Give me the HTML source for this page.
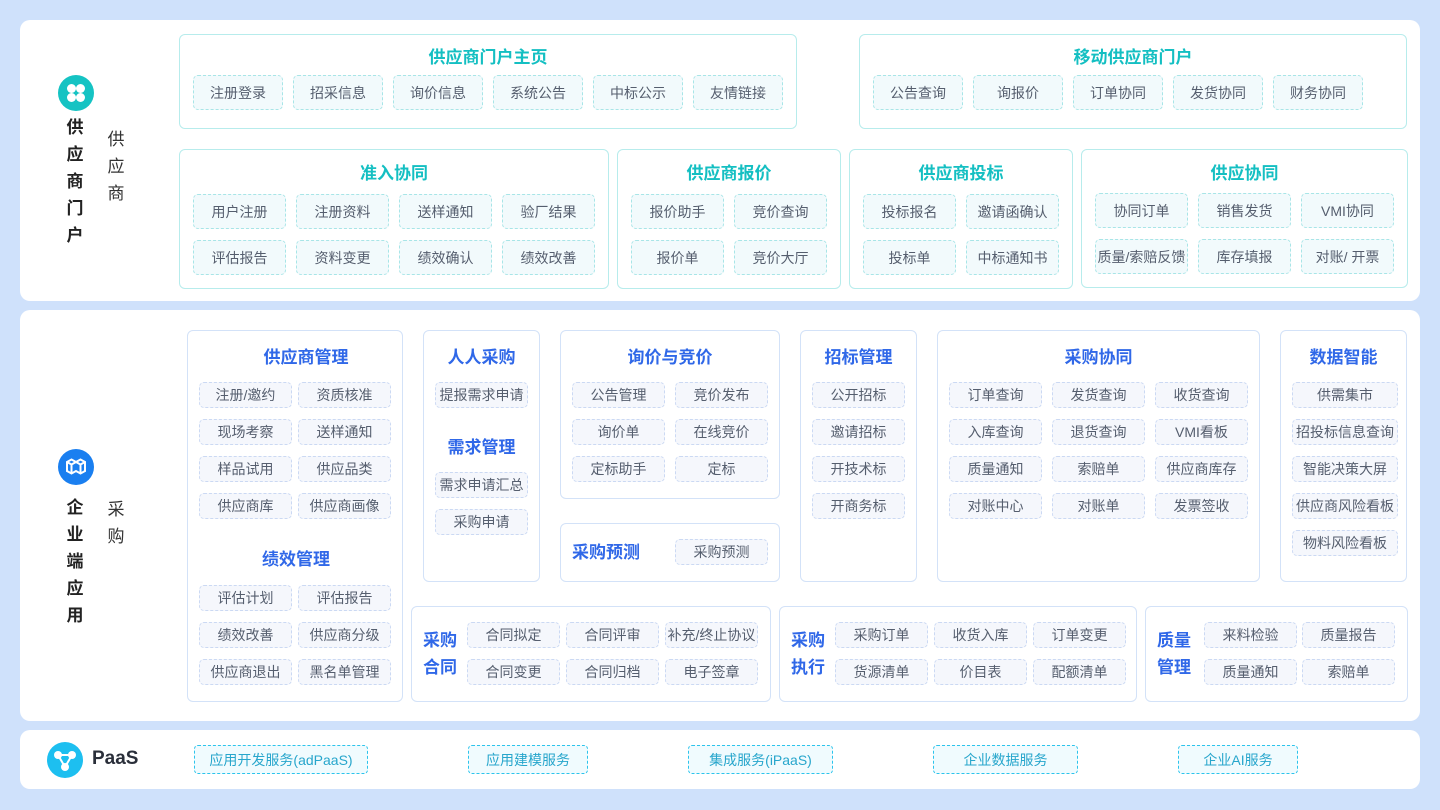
<!DOCTYPE html>
<html><head><meta charset="utf-8"><style>
*{margin:0;padding:0;box-sizing:border-box}
body{width:1440px;height:810px;background:#cfe1fb;position:relative;overflow:hidden;font-family:"Liberation Sans","Noto Sans CJK SC",sans-serif;color:#555e6e}
.p{position:absolute;background:#fff;border-radius:10px}
.b{position:absolute;border-radius:6px;background:#fff}
.t{border:1px solid #b7ecec}
.u{border:1px solid #d3e2f8}
.c{position:absolute;border-radius:5px;font-size:14px;display:flex;align-items:center;justify-content:center;white-space:nowrap}
.ct{background:#f2fafc;border:1px dashed #a8e5e7;height:35px;width:93px}
.cu{background:#f5f7fc;border:1px dashed #cbd9f3;height:26px;width:93px}
.h{position:absolute;font-size:17px;font-weight:bold;white-space:nowrap}
.ht{color:#14bfc2}
.hu{color:#3068e8}
.v{position:absolute;font-size:17px;line-height:27px;width:20px;text-align:center}
.pc{position:absolute;top:745px;height:29px;border:1px dashed #2cc4ec;background:#f0fbfe;color:#27a6cc;border-radius:4px;font-size:14px;display:flex;align-items:center;justify-content:center}
</style></head><body>
<div class="p" style="left:20px;top:20px;width:1400px;height:281px"></div>
<div class="p" style="left:20px;top:310px;width:1400px;height:411px"></div>
<div class="p" style="left:20px;top:730px;width:1400px;height:59px"></div>

<svg style="position:absolute;left:58px;top:75px" width="36" height="36" viewBox="0 0 36 36"><circle cx="18" cy="18" r="18" fill="#15c3c3"/><circle cx="13.5" cy="13.5" r="4.5" fill="#fff"/><circle cx="22.5" cy="13.5" r="4.5" fill="#fff"/><circle cx="13.5" cy="22.5" r="4.5" fill="#fff"/><circle cx="22.5" cy="22.5" r="4.5" fill="#fff"/></svg>
<div class="v" style="left:65px;top:114px;font-weight:bold;color:#222">供<br>应<br>商<br>门<br>户</div>
<div class="v" style="left:106px;top:126px;color:#333">供<br>应<br>商</div>
<svg style="position:absolute;left:58px;top:449px" width="36" height="36" viewBox="0 0 36 36"><circle cx="18" cy="18" r="18" fill="#1a7ff0"/><g fill="none" stroke="#fff" stroke-width="2"><path d="M9 13l4.5-2.5 4.5 2.5 4.5-2.5 4.5 2.5v9l-4.5 2.5-4.5-2.5-4.5 2.5-4.5-2.5z"/><path d="M9 13l4.5 2.5 4.5-2.5 4.5 2.5 4.5-2.5M13.5 15.5v9M22.5 15.5v9"/></g></svg>
<div class="v" style="left:65px;top:494px;font-weight:bold;color:#222">企<br>业<br>端<br>应<br>用</div>
<div class="v" style="left:106px;top:496px;color:#333">采<br>购</div>

<div class="b t" style="left:179px;top:34px;width:618px;height:95px"></div>
<div class="h ht" style="left:179px;width:618px;text-align:center;top:43px">供应商门户主页</div>
<div class="c ct" style="left:193px;top:75px;width:90px">注册登录</div>
<div class="c ct" style="left:293px;top:75px;width:90px">招采信息</div>
<div class="c ct" style="left:393px;top:75px;width:90px">询价信息</div>
<div class="c ct" style="left:493px;top:75px;width:90px">系统公告</div>
<div class="c ct" style="left:593px;top:75px;width:90px">中标公示</div>
<div class="c ct" style="left:693px;top:75px;width:90px">友情链接</div>

<div class="b t" style="left:859px;top:34px;width:548px;height:95px"></div>
<div class="h ht" style="left:859px;width:548px;text-align:center;top:43px">移动供应商门户</div>
<div class="c ct" style="left:873px;top:75px;width:90px">公告查询</div>
<div class="c ct" style="left:973px;top:75px;width:90px">询报价</div>
<div class="c ct" style="left:1073px;top:75px;width:90px">订单协同</div>
<div class="c ct" style="left:1173px;top:75px;width:90px">发货协同</div>
<div class="c ct" style="left:1273px;top:75px;width:90px">财务协同</div>

<div class="b t" style="left:179px;top:149px;width:430px;height:140px"></div>
<div class="h ht" style="left:179px;width:430px;text-align:center;top:159px">准入协同</div>
<div class="c ct" style="left:193px;top:194px">用户注册</div>
<div class="c ct" style="left:296px;top:194px">注册资料</div>
<div class="c ct" style="left:399px;top:194px">送样通知</div>
<div class="c ct" style="left:502px;top:194px">验厂结果</div>
<div class="c ct" style="left:193px;top:240px">评估报告</div>
<div class="c ct" style="left:296px;top:240px">资料变更</div>
<div class="c ct" style="left:399px;top:240px">绩效确认</div>
<div class="c ct" style="left:502px;top:240px">绩效改善</div>

<div class="b t" style="left:617px;top:149px;width:224px;height:140px"></div>
<div class="h ht" style="left:617px;width:224px;text-align:center;top:159px">供应商报价</div>
<div class="c ct" style="left:631px;top:194px">报价助手</div>
<div class="c ct" style="left:734px;top:194px">竞价查询</div>
<div class="c ct" style="left:631px;top:240px">报价单</div>
<div class="c ct" style="left:734px;top:240px">竞价大厅</div>

<div class="b t" style="left:849px;top:149px;width:224px;height:140px"></div>
<div class="h ht" style="left:849px;width:224px;text-align:center;top:159px">供应商投标</div>
<div class="c ct" style="left:863px;top:194px">投标报名</div>
<div class="c ct" style="left:966px;top:194px">邀请函确认</div>
<div class="c ct" style="left:863px;top:240px">投标单</div>
<div class="c ct" style="left:966px;top:240px">中标通知书</div>

<div class="b t" style="left:1081px;top:149px;width:327px;height:139px"></div>
<div class="h ht" style="left:1081px;width:327px;text-align:center;top:159px">供应协同</div>
<div class="c ct" style="left:1095px;top:193px">协同订单</div>
<div class="c ct" style="left:1198px;top:193px">销售发货</div>
<div class="c ct" style="left:1301px;top:193px">VMI协同</div>
<div class="c ct" style="left:1095px;top:239px">质量/索赔反馈</div>
<div class="c ct" style="left:1198px;top:239px">库存填报</div>
<div class="c ct" style="left:1301px;top:239px">对账/ 开票</div>

<div class="b u" style="left:187px;top:330px;width:216px;height:372px"></div>
<div class="h hu" style="left:199px;width:214px;text-align:center;top:343px">供应商管理</div>
<div class="c cu" style="left:199px;top:382px">注册/邀约</div>
<div class="c cu" style="left:298px;top:382px">资质核准</div>
<div class="c cu" style="left:199px;top:419px">现场考察</div>
<div class="c cu" style="left:298px;top:419px">送样通知</div>
<div class="c cu" style="left:199px;top:456px">样品试用</div>
<div class="c cu" style="left:298px;top:456px">供应品类</div>
<div class="c cu" style="left:199px;top:493px">供应商库</div>
<div class="c cu" style="left:298px;top:493px">供应商画像</div>
<div class="h hu" style="left:189px;width:214px;text-align:center;top:545px">绩效管理</div>
<div class="c cu" style="left:199px;top:585px">评估计划</div>
<div class="c cu" style="left:298px;top:585px">评估报告</div>
<div class="c cu" style="left:199px;top:622px">绩效改善</div>
<div class="c cu" style="left:298px;top:622px">供应商分级</div>
<div class="c cu" style="left:199px;top:659px">供应商退出</div>
<div class="c cu" style="left:298px;top:659px">黑名单管理</div>

<div class="b u" style="left:423px;top:330px;width:117px;height:252px"></div>
<div class="h hu" style="left:423px;width:117px;text-align:center;top:343px">人人采购</div>
<div class="c cu" style="left:435px;top:382px">提报需求申请</div>
<div class="h hu" style="left:423px;width:117px;text-align:center;top:433px">需求管理</div>
<div class="c cu" style="left:435px;top:472px">需求申请汇总</div>
<div class="c cu" style="left:435px;top:509px">采购申请</div>

<div class="b u" style="left:560px;top:330px;width:220px;height:169px"></div>
<div class="h hu" style="left:560px;width:220px;text-align:center;top:343px">询价与竞价</div>
<div class="c cu" style="left:572px;top:382px">公告管理</div>
<div class="c cu" style="left:675px;top:382px">竞价发布</div>
<div class="c cu" style="left:572px;top:419px">询价单</div>
<div class="c cu" style="left:675px;top:419px">在线竞价</div>
<div class="c cu" style="left:572px;top:456px">定标助手</div>
<div class="c cu" style="left:675px;top:456px">定标</div>

<div class="b u" style="left:560px;top:523px;width:220px;height:59px"></div>
<div class="h hu" style="left:572px;top:538px">采购预测</div>
<div class="c cu" style="left:675px;top:539px">采购预测</div>

<div class="b u" style="left:800px;top:330px;width:117px;height:252px"></div>
<div class="h hu" style="left:800px;width:117px;text-align:center;top:343px">招标管理</div>
<div class="c cu" style="left:812px;top:382px">公开招标</div>
<div class="c cu" style="left:812px;top:419px">邀请招标</div>
<div class="c cu" style="left:812px;top:456px">开技术标</div>
<div class="c cu" style="left:812px;top:493px">开商务标</div>

<div class="b u" style="left:937px;top:330px;width:323px;height:252px"></div>
<div class="h hu" style="left:937px;width:323px;text-align:center;top:343px">采购协同</div>
<div class="c cu" style="left:949px;top:382px">订单查询</div>
<div class="c cu" style="left:1052px;top:382px">发货查询</div>
<div class="c cu" style="left:1155px;top:382px">收货查询</div>
<div class="c cu" style="left:949px;top:419px">入库查询</div>
<div class="c cu" style="left:1052px;top:419px">退货查询</div>
<div class="c cu" style="left:1155px;top:419px">VMI看板</div>
<div class="c cu" style="left:949px;top:456px">质量通知</div>
<div class="c cu" style="left:1052px;top:456px">索赔单</div>
<div class="c cu" style="left:1155px;top:456px">供应商库存</div>
<div class="c cu" style="left:949px;top:493px">对账中心</div>
<div class="c cu" style="left:1052px;top:493px">对账单</div>
<div class="c cu" style="left:1155px;top:493px">发票签收</div>

<div class="b u" style="left:1280px;top:330px;width:127px;height:252px"></div>
<div class="h hu" style="left:1280px;width:127px;text-align:center;top:343px">数据智能</div>
<div class="c cu" style="left:1292px;top:382px;width:106px">供需集市</div>
<div class="c cu" style="left:1292px;top:419px;width:106px">招投标信息查询</div>
<div class="c cu" style="left:1292px;top:456px;width:106px">智能决策大屏</div>
<div class="c cu" style="left:1292px;top:493px;width:106px">供应商风险看板</div>
<div class="c cu" style="left:1292px;top:530px;width:106px">物料风险看板</div>

<div class="b u" style="left:411px;top:606px;width:360px;height:96px"></div>
<div class="h hu" style="left:423px;top:627px;line-height:27px">采购<br>合同</div>
<div class="c cu" style="left:467px;top:622px">合同拟定</div>
<div class="c cu" style="left:566px;top:622px">合同评审</div>
<div class="c cu" style="left:665px;top:622px">补充/终止协议</div>
<div class="c cu" style="left:467px;top:659px">合同变更</div>
<div class="c cu" style="left:566px;top:659px">合同归档</div>
<div class="c cu" style="left:665px;top:659px">电子签章</div>

<div class="b u" style="left:779px;top:606px;width:358px;height:96px"></div>
<div class="h hu" style="left:791px;top:627px;line-height:27px">采购<br>执行</div>
<div class="c cu" style="left:835px;top:622px">采购订单</div>
<div class="c cu" style="left:934px;top:622px">收货入库</div>
<div class="c cu" style="left:1033px;top:622px">订单变更</div>
<div class="c cu" style="left:835px;top:659px">货源清单</div>
<div class="c cu" style="left:934px;top:659px">价目表</div>
<div class="c cu" style="left:1033px;top:659px">配额清单</div>

<div class="b u" style="left:1145px;top:606px;width:263px;height:96px"></div>
<div class="h hu" style="left:1157px;top:627px;line-height:27px">质量<br>管理</div>
<div class="c cu" style="left:1204px;top:622px">来料检验</div>
<div class="c cu" style="left:1302px;top:622px">质量报告</div>
<div class="c cu" style="left:1204px;top:659px">质量通知</div>
<div class="c cu" style="left:1302px;top:659px">索赔单</div>

<svg style="position:absolute;left:47px;top:742px" width="36" height="36" viewBox="0 0 36 36"><circle cx="18" cy="18" r="18" fill="#1dbff0"/><g fill="#fff"><circle cx="11" cy="13" r="4"/><circle cx="25" cy="13" r="4"/><circle cx="18" cy="25" r="4"/></g><path d="M11 13L25 13 18 25Z" fill="none" stroke="#fff" stroke-width="2"/></svg>
<div style="position:absolute;left:92px;top:748px;font-size:19px;font-weight:bold;color:#2a2f3a">PaaS</div>
<div class="pc" style="left:194px;width:174px">应用开发服务(adPaaS)</div>
<div class="pc" style="left:468px;width:120px">应用建模服务</div>
<div class="pc" style="left:688px;width:145px">集成服务(iPaaS)</div>
<div class="pc" style="left:933px;width:145px">企业数据服务</div>
<div class="pc" style="left:1178px;width:120px">企业AI服务</div>
</body></html>
